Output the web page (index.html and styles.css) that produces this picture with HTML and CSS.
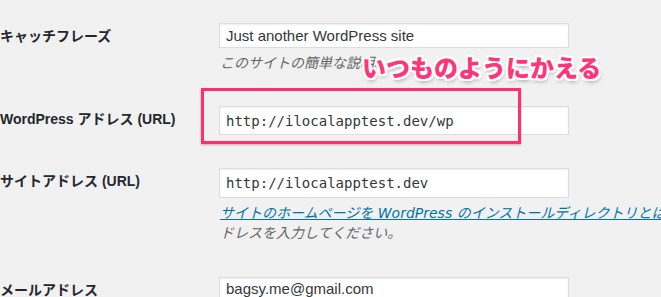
FILE: index.html
```html
<!DOCTYPE html>
<html lang="ja">

<head>
    <meta charset="UTF-8">
    <meta name="viewport" content="width=device-width, initial-scale=1.0">
    <title>一般設定</title>
    <link rel="stylesheet" href="styles.css">
</head>

<body>
    <div class="page">
        <div class="form">
            <div class="row first">
                <label class="label">キャッチフレーズ</label>
                <div class="field">
                    <div class="input h25">Just another WordPress site</div>
                    <p class="desc">このサイトの簡単な説明。</p>
                </div>
            </div>

            <div class="row gap33">
                <label class="label">WordPress アドレス (URL)</label>
                <div class="field">
                    <div class="input code h29">http://ilocalapptest.dev/wp</div>
                </div>
            </div>

            <div class="row gap33">
                <label class="label">サイトアドレス (URL)</label>
                <div class="field">
                    <div class="input code h30">http://ilocalapptest.dev</div>
                    <p class="desc wide"><a href="#">サイトのホームページを WordPress のインストールディレクトリとは異なる場所にする場合は</a>、ここにサイトのア<br>ドレスを入力してください。</p>
                </div>
            </div>

            <div class="row gap34">
                <label class="label">メールアドレス</label>
                <div class="field">
                    <div class="input h30 top">bagsy.me@gmail.com</div>
                </div>
            </div>
        </div>

        <!-- annotation layer -->
        <div class="mark-box"></div>
        <div class="mark-text">いつものようにかえる</div>
    </div>
</body>

</html>
```

FILE: styles.css
```css
body {
    margin: 0;
    padding: 0;
    background: #f1f1f1;
    font-family: "Liberation Sans", "Noto Sans CJK JP", sans-serif;
    color: #23282d;
    overflow: hidden;
}

.page {
    position: relative;
    width: 661px;
    height: 297px;
    overflow: hidden;
}

.form {
    display: flex;
    flex-direction: column;
    padding-top: 23px;
}

.row {
    display: grid;
    grid-template-columns: 219px 350px;
    align-items: start;
}

.gap33 {
    margin-top: 33px;
}

.gap34 {
    margin-top: 34px;
}

.label {
    padding-top: 3px;
    line-height: 20px;
    font-size: 14px;
    font-weight: bold;
    white-space: nowrap;
}

.input {
    box-sizing: border-box;
    display: flex;
    align-items: center;
    padding: 0 6px;
    background: #fff;
    border: 1px solid #ddd;
    box-shadow: inset 0 1px 2px rgba(0, 0, 0, .07);
    font-size: 15px;
    color: #32373c;
    white-space: nowrap;
}

.input.top {
    align-items: flex-start;
    padding-top: 2px;
}

.h25 {
    height: 25px;
}

.h29 {
    height: 29px;
}

.h30 {
    height: 30px;
}

.code {
    font-family: "DejaVu Sans Mono", "Liberation Mono", monospace;
    font-size: 14px;
    padding-left: 6px;
}

.desc {
    margin: 5px 0 0 1px;
    line-height: 20px;
    font-family: "DejaVu Sans", "Noto Sans CJK JP", sans-serif;
    font-size: 14px;
    font-style: italic;
    color: #666;
    white-space: nowrap;
}

.wide {
    margin-top: 5px;
}

.desc a {
    color: #0073aa;
    text-decoration: underline;
}

.mark-box {
    position: absolute;
    left: 201px;
    top: 88px;
    width: 320px;
    height: 56px;
    box-sizing: border-box;
    border: 3px solid #ff2f6e;
    box-shadow: 0 1px 2px rgba(0, 0, 0, .25);
}

.mark-text {
    position: absolute;
    left: 362px;
    top: 50px;
    font-family: "Noto Sans CJK JP", sans-serif;
    font-size: 24px;
    font-weight: 900;
    line-height: 34px;
    color: #ff3579;
    text-shadow:
        2px 0 0 #fff, -2px 0 0 #fff, 0 2px 0 #fff, 0 -2px 0 #fff,
        2px 2px 0 #fff, -2px -2px 0 #fff, 2px -2px 0 #fff, -2px 2px 0 #fff,
        1px 3px 4px rgba(0, 0, 0, .35);
}
```
